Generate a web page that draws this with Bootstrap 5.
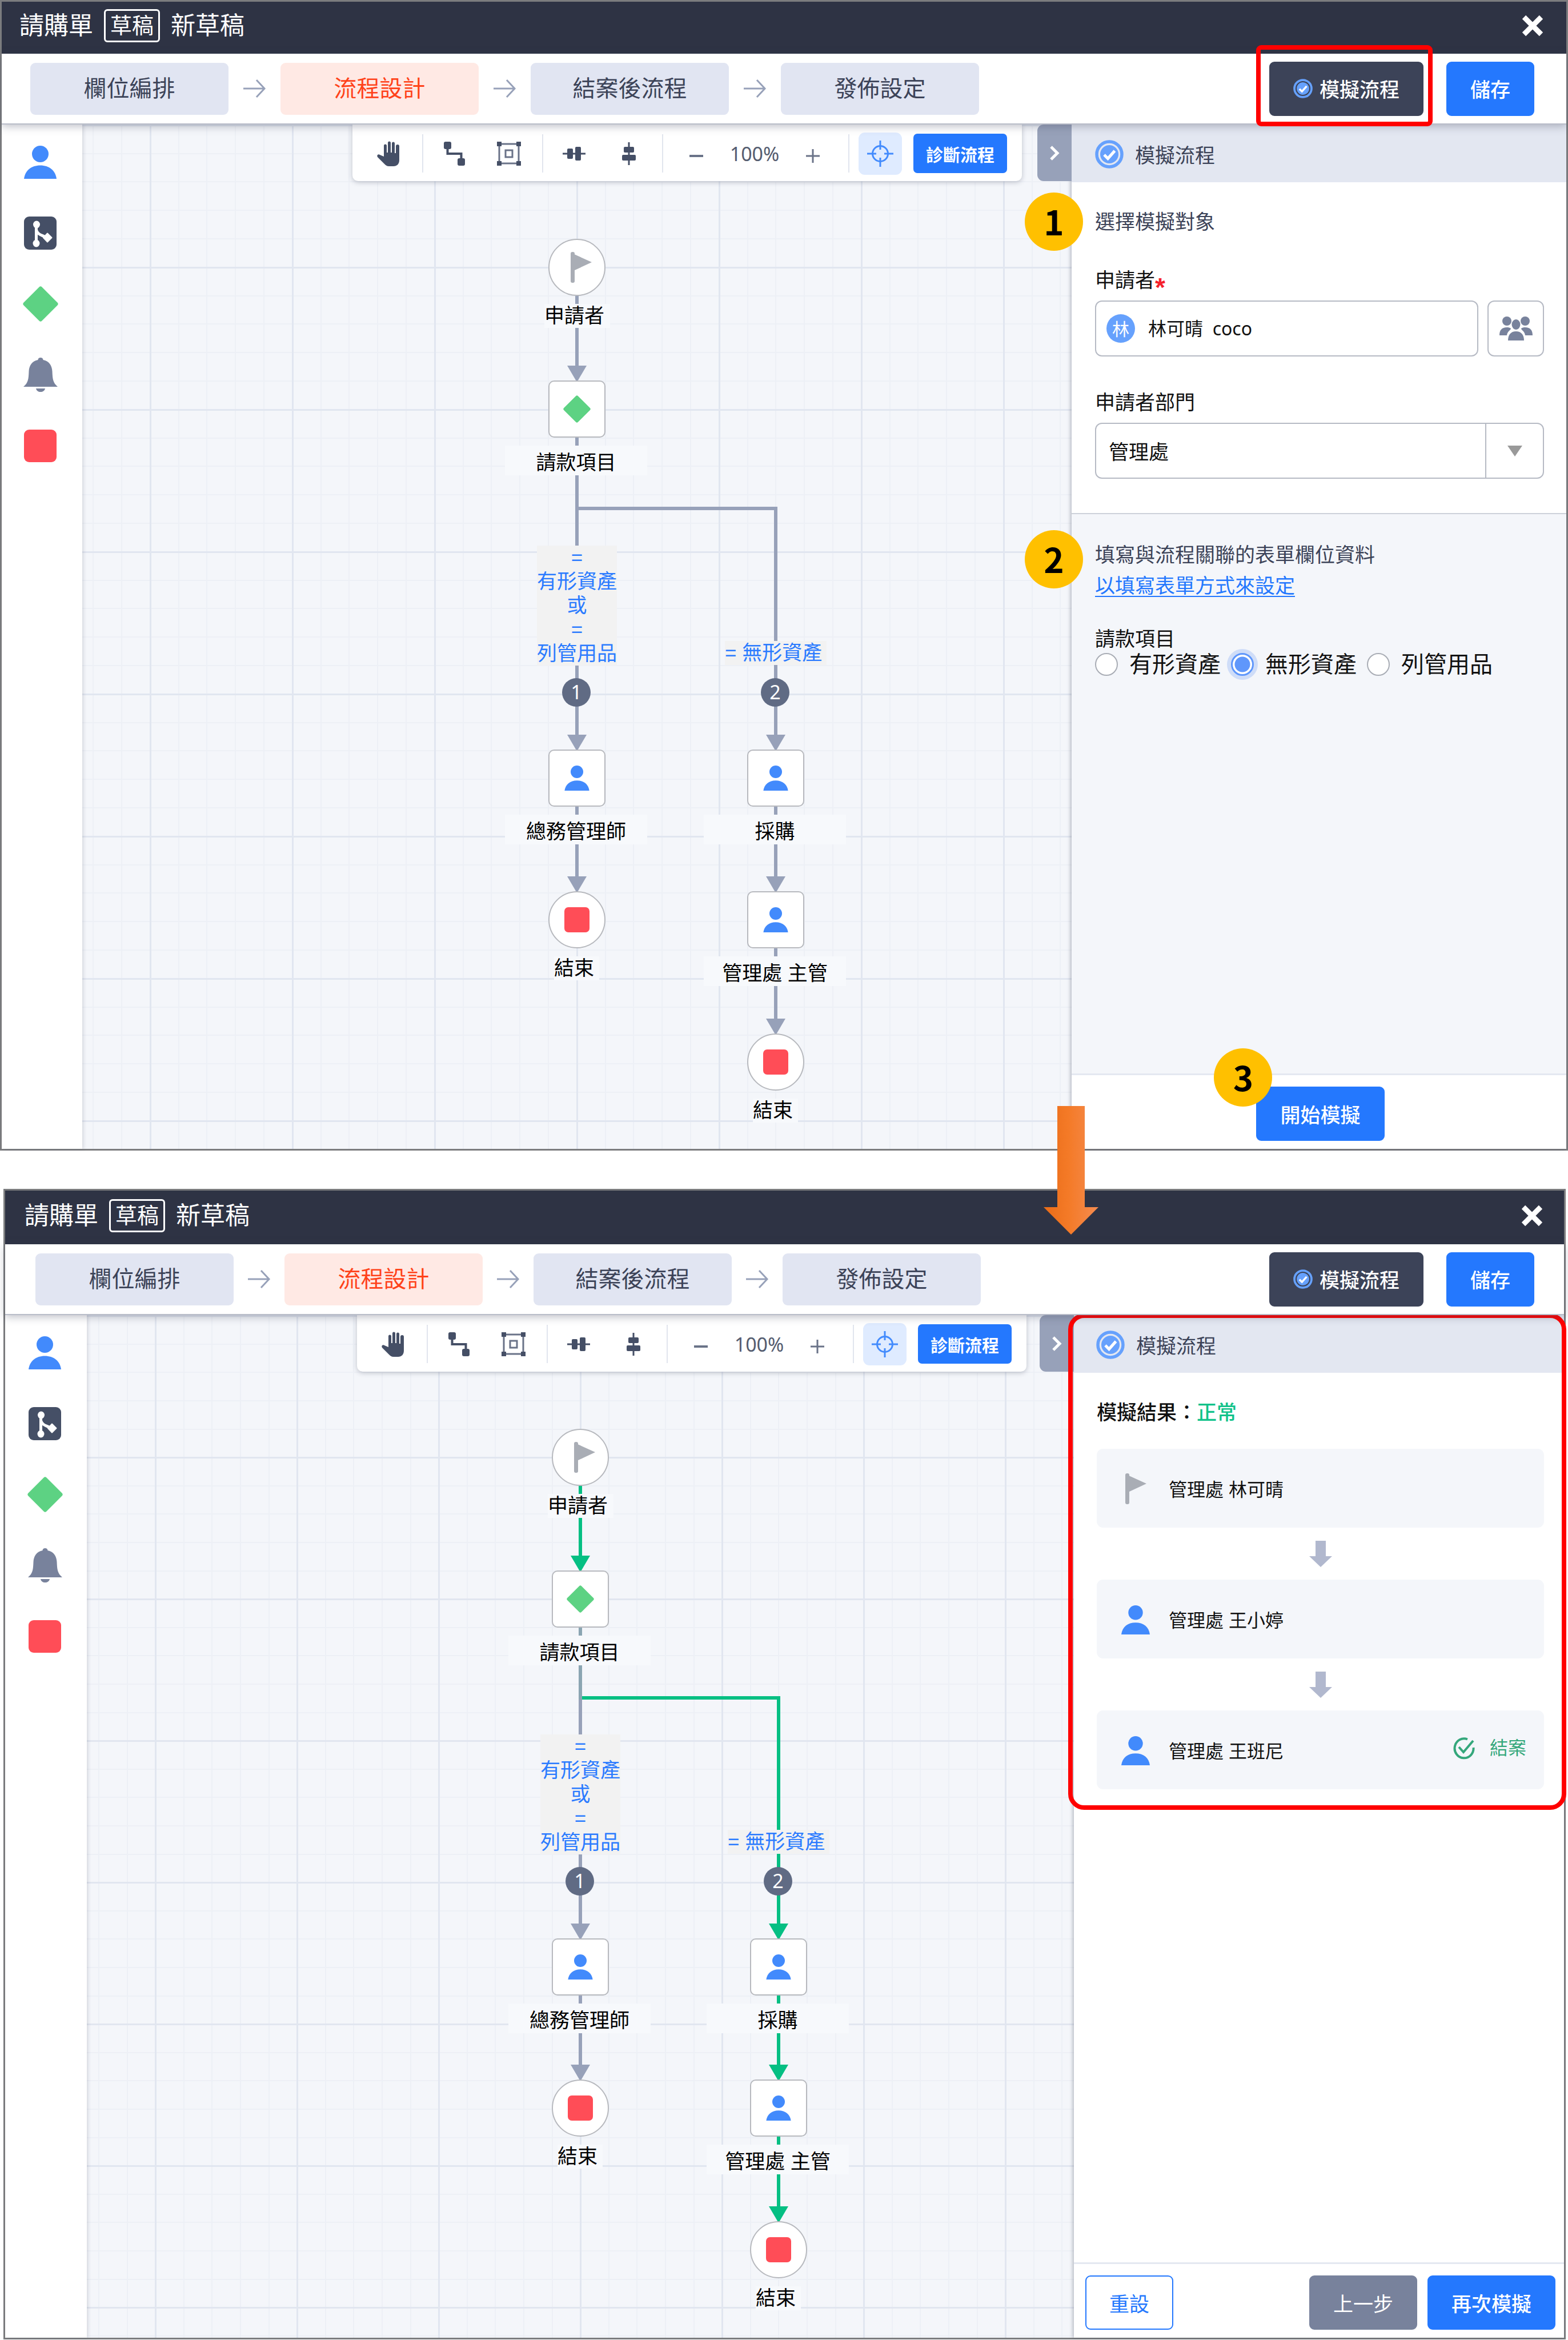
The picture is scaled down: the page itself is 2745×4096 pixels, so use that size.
<!DOCTYPE html>
<html lang="zh-Hant">
<head>
<meta charset="utf-8">
<meta name="viewport" content="width=device-width, initial-scale=1">
<title>請購單 流程設計</title>
<link href="https://cdn.jsdelivr.net/npm/bootstrap@5.3.0/dist/css/bootstrap.min.css" rel="stylesheet">
<style>
  :root {
    --ink: #3c4358;
    --navy: #2e3344;
    --blue: #2478fe;
    --sky: #66a1fd;
    --slate: #78829c;
    --edge: #97a1b9;
    --mist: #f4f6fa;
    --tab: #e3e7f1;
    --cjk: "Noto Sans CJK TC", "Noto Sans", sans-serif;
  }
  body {
    font-family: "Liberation Sans", "Noto Sans CJK TC", sans-serif;
    font-size: 35px;
    line-height: 50px;
    color: #111;
    background: #fff;
  }
  svg { display: block; flex: none; }
  .app-window { border: 3px solid #7b7c7e; }
  .window-after { margin: 0 4px 0 6px; }

  /* title bar */
  .title-bar { height: 91px; padding: 0 39px 8px 31px; background: var(--navy); color: #fff; font-size: 43px; gap: 19px; }
  .window-after .title-bar { height: 94px; padding: 0 36px 6px 34px; }
  .draft-tag { font-size: 38px; line-height: 52px; height: 58px; padding: 0 8px; border: 3px solid #fff; border-radius: 6px; }
  .plain-btn { border: 0; padding: 0; background: none; }

  /* step row */
  .step-row { height: 124px; padding: 0 56px 0 50px; border-bottom: 2px solid #b9bdc9; background: #fff; z-index: 3; box-shadow: 0 3px 14px rgba(60, 67, 88, .35); }
  .window-after .step-row { padding: 0 52px 0 53px; }
  .step-list { gap: 25px; }
  .window-after .step-list { gap: 24px; }
  .step-btn { width: 347px; height: 91px; font-size: 40px; line-height: 50px; border: 0; border-radius: 9px; background: #e1e5f2; color: var(--ink); }
  .step-btn:hover { background: #e1e5f2; color: var(--ink); }
  .step-btn.active { background: #ffe9e4; color: #ff4219; }
  .act-btn { height: 95px; padding: 0 40px; font-family: var(--cjk); font-size: 35px; line-height: 50px; font-weight: 500; border: 2px solid var(--blue); border-radius: 9px; background: var(--blue); color: #fff; }
  .act-dark { background: var(--ink); border-color: var(--ink); gap: 12px; }
  .act-grey { background: var(--slate); border-color: var(--slate); font-weight: 400; }
  .act-line { background: #fff; color: var(--blue); font-weight: 400; }

  /* palette */
  .palette { width: 141px; padding: 4px 6px 0 0; background: #fff; z-index: 1; box-shadow: 2px 0 6px rgba(60, 67, 88, .18); }
  .window-after .palette { width: 143px; padding-right: 4px; }
  .palette button { height: 124px; }

  /* canvas */
  .flow-canvas {
    --pitch: 249px; --ca: 866px; --cb: 1214px;
    --r1: 250px; --r2: 498px; --r3: 994px; --r4: 1144px; --r5: 1392px; --r6: 1641px;
    --cond-a: 737px; --cond-b: 904px;
    height: 1793px;
    background-color: var(--mist);
    background-image:
      linear-gradient(to right, #e1e6f0 0 3px, transparent 3px),
      linear-gradient(to bottom, #e1e6f0 0 3px, transparent 3px),
      linear-gradient(to right, transparent 50px, #edf0f6 50px 52px, transparent 52px 99px, #edf0f6 99px 101px, transparent 101px 149px, #edf0f6 149px 151px, transparent 151px 199px, #edf0f6 199px 201px, transparent 201px),
      linear-gradient(to bottom, transparent 50px, #edf0f6 50px 52px, transparent 52px 99px, #edf0f6 99px 101px, transparent 101px 149px, #edf0f6 149px 151px, transparent 151px 199px, #edf0f6 199px 201px, transparent 201px);
    background-size: var(--pitch) var(--pitch);
    background-position: calc(var(--ca) - 1px) calc(var(--r1) - 1px);
  }
  .window-after .flow-canvas {
    --pitch: 248px; --ca: 864px; --cb: 1211px;
    --r1: 249px; --r2: 497px; --r3: 991px; --r4: 1141px; --r5: 1388px; --r6: 1636px;
    --cond-a: 734px; --cond-b: 901px;
    height: 1790px;
  }
  .edge-layer { position: absolute; left: 0; top: 0; width: 1500px; height: 1700px; fill: none; stroke-width: 6; }
  .on-a { left: var(--ca); }
  .on-b { left: var(--cb); }
  .at-1 { top: var(--r1); }
  .at-2 { top: var(--r2); }
  .at-3 { top: var(--r3); }
  .at-4 { top: var(--r4); }
  .at-5 { top: var(--r5); }
  .at-6 { top: var(--r6); }
  .flow-node { position: absolute; width: 100px; height: 100px; margin: -50px 0 0 -50px; border: 2px solid #b7b9be; border-radius: 10px; background: #fff; }
  .flow-node.is-round { border-radius: 50%; }
  .flow-node.is-start { padding-left: 14px; }
  .flow-caption { position: absolute; width: 249px; height: 52px; padding-top: 8px; line-height: 44px; margin: 64px 0 0 -126px; background: #f7f9fc; color: #000; text-align: center; white-space: nowrap; }
  .flow-caption.is-start, .flow-caption.is-end { height: 42px; padding-top: 0; line-height: 42px; text-align: left; }
  .flow-caption.is-start { width: 115px; margin-left: -57px; }
  .flow-caption.is-end { width: 79px; margin-left: -40px; }
  .flow-rule { position: absolute; width: 140px; margin-left: -70px; line-height: 42px; background: #f2f2f2; color: #2b7bff; text-align: center; white-space: nowrap; }
  .rule-a { top: var(--cond-a); }
  .rule-b { top: var(--cond-b); width: 178px; margin-left: -89px; text-align: left; }
  .flow-order { position: absolute; width: 50px; height: 50px; margin: -25px 0 0 -26px; border-radius: 50%; background: #606b84; color: #fff; font: 34px/48px "Noto Sans", sans-serif; text-align: center; }

  /* floating tools */
  .tool-strip { position: absolute; left: 473px; top: 0; height: 99px; padding: 2px 26px 0; background: #fff; border-radius: 0 0 10px 10px; box-shadow: 0 2px 8px rgba(60, 67, 88, .3); }
  .tool-pair { gap: 20px; }
  .tool-btn { width: 76px; height: 74px; border-radius: 11px; }
  .tool-btn.wide { width: 84px; }
  .tool-btn.lit { background: #dfebff; }
  .tool-rule { width: 2px; height: 67px; margin: 0 16px 0 20px; background: #e1e5ee; }
  .zoom-text { width: 120px; font-family: "Noto Sans", sans-serif; font-size: 34px; text-align: center; color: #555d70; }
  .check-btn { height: 69px; padding: 0 22px; margin-left: 20px; font-family: var(--cjk); font-size: 30px; line-height: 40px; font-weight: 700; border: 0; border-radius: 7px; background: var(--blue); color: #fff; }

  /* side panel */
  .side-panel { width: 866px; background: #fff; z-index: 2; box-shadow: -2px 0 6px rgba(60, 67, 88, .35); }
  .window-after .side-panel { width: 858px; }
  .fold-tab { position: absolute; left: -60px; top: 0; width: 60px; height: 99px; border: 0; border-radius: 11px 0 0 11px; background: var(--edge); }
  .side-head { height: 101px; padding: 2px 0 0 41px; gap: 20px; background: var(--tab); color: var(--ink); font-family: var(--cjk); }
  .window-after .side-head { padding-left: 39px; }
  .side-block { padding: 45px 39px 60px 41px; }
  .field-gap { margin-top: 10px; }
  .field-box { height: 98px; border: 2px solid #b6bac4; border-radius: 12px; background: #fff; }
  .field-box .form-control, .field-box .form-select { border: 0; box-shadow: none; background: none; font-family: var(--cjk); font-size: inherit; line-height: 50px; color: #111; }
  .person-box { padding-left: 18px; gap: 23px; }
  .person-box .form-control { font-family: "Noto Sans", "Noto Sans CJK TC", sans-serif; font-size: 32px; padding: 0; }
  .avatar-dot { width: 50px; height: 50px; border-radius: 50%; background: var(--sky); color: #fff; font-family: var(--cjk); font-size: 30px; line-height: 48px; text-align: center; flex: none; }
  .group-btn { width: 99px; }
  .field-box .form-select { padding: 0 22px; }
  .drop-end { width: 101px; border-left: 2px solid #b6bac4; }
  .need-mark { color: #f5222d; font-size: 46px; font-weight: 700; line-height: 20px; vertical-align: -16px; }
  .form-part { padding-top: 47px; background: var(--mist); border-top: 2px solid #cdd1da; }
  .text-ink { color: var(--ink); }
  .form-part a { color: var(--blue); text-decoration-thickness: 2px; text-underline-offset: 5px; }
  .choice-title { font-size: 35px; line-height: 40px; }
  .choice-row { gap: 18px; font-size: 40px; line-height: 48px; }
  .choice-row .form-check-input { width: 40px; height: 40px; margin: 0 20px 0 0; border: 2px solid #a9adb5; float: none; background-color: #fff; }
  .choice-row .form-check-input:checked { border: 3px solid #5f97fb; background-image: radial-gradient(circle, #5f97fb 0 13px, #fff 14px); box-shadow: 0 0 0 7px #cfddf8; }
  .side-foot { border-top: 3px solid #e4e8f1; padding: 20px 15px 14px 20px; gap: 18px; background: #fff; }

  /* result list */
  .result-block { padding: 45px 35px 0 40px; }
  .result-title { font-weight: 500; margin-bottom: 38px; }
  .pass-text { color: #12c28a; }
  .result-card { height: 138px; padding: 2px 31px 0 43px; border-radius: 11px; background: var(--mist); font-size: 32px; }
  .icon-slot { width: 50px; margin-right: 33px; }
  .result-gap { height: 91px; }
  .done-note { color: #34a77b; gap: 26px; }

  /* annotations */
  .call-frame { position: absolute; border: 8px solid #f00; pointer-events: none; z-index: 4; }
  .frame-btn { inset: -29px 0 -18px -23px; border-radius: 9px; }
  .frame-side { left: -10px; right: -4px; top: -3px; height: 869px; border-radius: 28px; }
  .call-num { position: absolute; width: 102px; height: 102px; border-radius: 50%; background: #ffc000; color: #000; font-family: var(--cjk); font-size: 60px; line-height: 98px; font-weight: 700; text-align: center; z-index: 5; }
  .num-pick { left: -82px; top: 119px; }
  .num-fill { left: -82px; top: 28px; }
  .num-run { left: -74px; top: -67px; }
  .next-step { height: 67px; z-index: 6; }
  .next-step svg { position: absolute; left: 1827px; top: -78px; }
</style>
</head>
<body>

<svg width="0" height="0" class="position-absolute" aria-hidden="true">
  <defs>
    <linearGradient id="orange" x1="0" x2="1" y1="0" y2="0"><stop offset="0" stop-color="#e96c18"/><stop offset=".45" stop-color="#f47a27"/><stop offset="1" stop-color="#f58c50"/></linearGradient>
    <marker id="tip-grey" viewBox="0 0 30 34" refX="1" refY="17" markerWidth="30" markerHeight="34" markerUnits="userSpaceOnUse" orient="auto"><path d="M0 0 29 17 0 34z" fill="#97a1b9"/></marker>
    <marker id="tip-pass" viewBox="0 0 30 34" refX="1" refY="17" markerWidth="30" markerHeight="34" markerUnits="userSpaceOnUse" orient="auto"><path d="M0 0 29 17 0 34z" fill="#05bf83"/></marker>
    <symbol id="i-person" viewBox="0 0 57 58"><circle cx="28.500" cy="14.500" r="14.500"/><path d="M0 58C2 43 13 34.500 28.500 34.500S55 43 57 58z"/></symbol>
    <symbol id="i-branch" viewBox="0 0 57 58"><rect width="57" height="58" rx="9" fill="#454f66"/><path d="M21.500 13v33M21.500 24c3 8 9 8 18 13" fill="none" stroke="#fff" stroke-width="5"/><ellipse cx="22" cy="14" rx="6" ry="6.500" fill="#fff"/><ellipse cx="21.500" cy="47" rx="6" ry="6.500" fill="#fff"/><path d="M41 29.500 48.500 37 41 44.500 34 37z" fill="#fff" stroke="#fff" stroke-width="2" stroke-linejoin="round"/></symbol>
    <symbol id="i-diamond" viewBox="0 0 62 62"><path d="M31 4 58 31 31 58 4 31z" fill="#5dd283" stroke="#5dd283" stroke-width="7" stroke-linejoin="round"/></symbol>
    <symbol id="i-bell" viewBox="0 0 60 60"><path d="M30 0c2.500 0 4.500 1.500 4.500 4C45 6 50 14 50.500 24c.5 13 1 20 9.500 27H0c8.500-7 9-14 9.500-27C10 14 15 6 25.500 4c0-2.500 2-4 4.500-4zM22 54h16c-1 4-4 6-8 6s-7-2-8-6z"/></symbol>
    <symbol id="i-stop" viewBox="0 0 57 57"><rect width="57" height="57" rx="9" fill="#ff4d57"/></symbol>
    <symbol id="i-flag" viewBox="0 0 37 54"><path d="M4 3 37 18 7 32z"/><rect width="7" height="54" rx="3"/></symbol>
    <symbol id="i-check" viewBox="0 0 50 50"><circle cx="25" cy="25" r="22" fill="none" stroke="#66a1fd" stroke-width="5.500"/><circle cx="25" cy="25" r="16" fill="#66a1fd"/><path d="m16 26 6.500 6.500L34.500 19" fill="none" stroke="#fff" stroke-width="5"/></symbol>
    <symbol id="i-close" viewBox="0 0 40 40"><path d="M5 5l30 30M35 5 5 35" stroke="#fff" stroke-width="9"/></symbol>
    <symbol id="i-hand" viewBox="0 0 42 44"><path d="M12 27V8a2.500 2.500 0 0 1 5 0v12h2V3a2.500 2.500 0 0 1 5 0v17h2V4a2.500 2.500 0 0 1 5 0v17h2V9a2.500 2.500 0 0 1 6 0v24c0 7-4 11-10 11h-8c-4 0-6-2-8-4L1 28c-2-3 1-6 4-4z"/></symbol>
    <symbol id="i-link" viewBox="0 0 37 42"><rect x="0" y="0" width="13" height="13" rx="3"/><rect x="24" y="29" width="13" height="13" rx="3"/><path d="M6.500 10v11h24v10" fill="none" stroke="#454f66" stroke-width="4"/></symbol>
    <symbol id="i-frame" viewBox="0 0 42 42"><path d="M4 4h34v34H4zM15 15h12v12H15z" fill="none" stroke="#6a7388" stroke-width="3"/><path d="M0 0h8v8H0zM34 0h8v8h-8zM0 34h8v8H0zM34 34h8v8h-8z"/></symbol>
    <symbol id="i-row" viewBox="0 0 40 24"><path d="M0 10.500h40v3H0z"/><rect x="8" y="3" width="10" height="18" rx="2"/><rect x="22" y="0" width="10" height="24" rx="2"/></symbol>
    <symbol id="i-col" viewBox="0 0 24 40"><path d="M10.500 0h3v40h-3z"/><rect x="3" y="8" width="18" height="10" rx="2"/><rect x="0" y="22" width="24" height="10" rx="2"/></symbol>
    <symbol id="i-minus" viewBox="0 0 24 24"><path d="M0 12h24" stroke="#6a7388" stroke-width="4"/></symbol>
    <symbol id="i-plus" viewBox="0 0 24 24"><path d="M0 12h24M12 0v24" stroke="#6a7388" stroke-width="3"/></symbol>
    <symbol id="i-target" viewBox="0 0 46 46"><g fill="none" stroke="#438bfd" stroke-width="3"><circle cx="23" cy="23" r="13.500"/><path d="M23 0v16M23 30v16M0 23h16M30 23h16"/></g></symbol>
    <symbol id="i-fold" viewBox="0 0 20 28"><path d="m4 3 11 11L4 25" fill="none" stroke="#fff" stroke-width="5"/></symbol>
    <symbol id="i-group" viewBox="0 0 58 42"><circle cx="13" cy="8" r="8"/><circle cx="45" cy="8" r="8"/><path d="M0 33c0-9 4-14 13-14 3 0 5 .5 7 2 0 3-6 4-7 12zM58 33c0-9-4-14-13-14-3 0-5 .5-7 2 0 3 6 4 7 12z"/><ellipse cx="29" cy="14" rx="7.500" ry="9"/><path d="M15 42c0-10 5-16 14-16s14 6 14 16z"/></symbol>
    <symbol id="i-arrow" viewBox="0 0 41 34"><path d="M1 17h37M24 2l14 15-14 15" fill="none" stroke="#97a1b9" stroke-width="3"/></symbol>
    <symbol id="i-down" viewBox="0 0 40 46"><path d="M11 0h18v27h11L20 46 0 27h11z" fill="#b1b8ce"/></symbol>
    <symbol id="i-done" viewBox="0 0 38 40"><g fill="none" stroke="#34a77b" stroke-width="4"><path d="M25 4.500A16.500 17 0 1 0 35.500 19"/><path d="m10 18 8 9L35 7"/></g></symbol>
  </defs>
</svg>

<section class="app-window position-relative">
  <header class="title-bar d-flex align-items-center">
    <span>請購單</span>
    <span class="draft-tag">草稿</span>
    <span>新草稿</span>
    <button type="button" class="plain-btn ms-auto" aria-label="關閉"><svg width="40" height="40"><use href="#i-close"/></svg></button>
  </header>
  <div class="step-row d-flex align-items-center justify-content-between position-relative">
    <nav class="step-list d-flex align-items-center" aria-label="步驟">
      <button type="button" class="btn step-btn">欄位編排</button>
      <svg width="41" height="34"><use href="#i-arrow"/></svg>
      <button type="button" class="btn step-btn active">流程設計</button>
      <svg width="41" height="34"><use href="#i-arrow"/></svg>
      <button type="button" class="btn step-btn">結案後流程</button>
      <svg width="41" height="34"><use href="#i-arrow"/></svg>
      <button type="button" class="btn step-btn">發佈設定</button>
    </nav>
    <div class="d-flex">
      <div class="position-relative me-4 pe-3">
        <button type="button" class="btn act-btn act-dark d-flex align-items-center"><svg width="34" height="34"><use href="#i-check"/></svg>模擬流程</button>
        <span class="call-frame frame-btn"></span>
      </div>
      <button type="button" class="btn act-btn">儲存</button>
    </div>
  </div>
  <div class="d-flex align-items-stretch">
    <aside class="palette d-flex flex-column align-items-center flex-shrink-0">
      <button type="button" class="plain-btn" aria-label="人員"><svg width="57" height="58" fill="#428afc"><use href="#i-person"/></svg></button>
      <button type="button" class="plain-btn" aria-label="分支"><svg width="57" height="58"><use href="#i-branch"/></svg></button>
      <button type="button" class="plain-btn" aria-label="條件"><svg width="62" height="62"><use href="#i-diamond"/></svg></button>
      <button type="button" class="plain-btn" aria-label="通知"><svg width="60" height="60" fill="#78829c"><use href="#i-bell"/></svg></button>
      <button type="button" class="plain-btn" aria-label="結束"><svg width="57" height="57"><use href="#i-stop"/></svg></button>
    </aside>
    <main class="flow-canvas position-relative flex-grow-1">
      <svg class="edge-layer" stroke="#97a1b9">
        <path d="M866 300V423" marker-end="url(#tip-grey)"/>
        <path d="M866 548V1069" marker-end="url(#tip-grey)"/>
        <path d="M866 672H1214V1069" marker-end="url(#tip-grey)"/>
        <path d="M866 1194V1317" marker-end="url(#tip-grey)"/>
        <path d="M1214 1194V1317" marker-end="url(#tip-grey)"/>
        <path d="M1214 1442V1566" marker-end="url(#tip-grey)"/>
      </svg>
      <div class="flow-node is-round is-start on-a at-1 d-flex align-items-center justify-content-center"><svg width="37" height="54" fill="#a9adb5"><use href="#i-flag"/></svg></div>
      <div class="flow-caption is-start on-a at-1">申請者</div>
      <div class="flow-node on-a at-2 d-flex align-items-center justify-content-center"><svg width="48" height="48"><use href="#i-diamond"/></svg></div>
      <div class="flow-caption on-a at-2">請款項目</div>
      <div class="flow-rule rule-a on-a">=<br>有形資產<br>或<br>=<br>列管用品</div>
      <div class="flow-rule rule-b on-b">= 無形資產</div>
      <div class="flow-order on-a at-3">1</div>
      <div class="flow-order on-b at-3">2</div>
      <div class="flow-node on-a at-4 d-flex align-items-center justify-content-center"><svg width="44" height="44" fill="#428afc"><use href="#i-person"/></svg></div>
      <div class="flow-caption on-a at-4">總務管理師</div>
      <div class="flow-node on-b at-4 d-flex align-items-center justify-content-center"><svg width="44" height="44" fill="#428afc"><use href="#i-person"/></svg></div>
      <div class="flow-caption on-b at-4">採購</div>
      <div class="flow-node is-round on-a at-5 d-flex align-items-center justify-content-center"><svg width="44" height="44"><use href="#i-stop"/></svg></div>
      <div class="flow-caption is-end on-a at-5">結束</div>
      <div class="flow-node on-b at-5 d-flex align-items-center justify-content-center"><svg width="44" height="44" fill="#428afc"><use href="#i-person"/></svg></div>
      <div class="flow-caption on-b at-5">管理處 主管</div>
      <div class="flow-node is-round on-b at-6 d-flex align-items-center justify-content-center"><svg width="44" height="44"><use href="#i-stop"/></svg></div>
      <div class="flow-caption is-end on-b at-6">結束</div>

      <div class="tool-strip d-flex align-items-center" role="toolbar" aria-label="畫布工具">
        <button type="button" class="plain-btn tool-btn d-flex align-items-center justify-content-center" aria-label="移動"><svg width="42" height="44" fill="#454f66"><use href="#i-hand"/></svg></button>
        <span class="tool-rule"></span>
        <div class="tool-pair d-flex">
          <button type="button" class="plain-btn tool-btn d-flex align-items-center justify-content-center" aria-label="連線"><svg width="37" height="42" fill="#454f66"><use href="#i-link"/></svg></button>
          <button type="button" class="plain-btn tool-btn d-flex align-items-center justify-content-center" aria-label="框選"><svg width="42" height="42" fill="#454f66"><use href="#i-frame"/></svg></button>
        </div>
        <span class="tool-rule"></span>
        <div class="tool-pair d-flex">
          <button type="button" class="plain-btn tool-btn d-flex align-items-center justify-content-center" aria-label="水平對齊"><svg width="40" height="24" fill="#454f66"><use href="#i-row"/></svg></button>
          <button type="button" class="plain-btn tool-btn d-flex align-items-center justify-content-center" aria-label="垂直對齊"><svg width="24" height="40" fill="#454f66"><use href="#i-col"/></svg></button>
        </div>
        <span class="tool-rule"></span>
        <button type="button" class="plain-btn tool-btn wide d-flex align-items-center justify-content-center pt-2" aria-label="縮小"><svg width="24" height="24"><use href="#i-minus"/></svg></button>
        <span class="zoom-text">100%</span>
        <button type="button" class="plain-btn tool-btn wide d-flex align-items-center justify-content-center pt-2" aria-label="放大"><svg width="24" height="24"><use href="#i-plus"/></svg></button>
        <span class="tool-rule"></span>
        <button type="button" class="plain-btn tool-btn lit d-flex align-items-center justify-content-center" aria-label="置中"><svg width="46" height="46"><use href="#i-target"/></svg></button>
        <button type="button" class="btn check-btn">診斷流程</button>
      </div>
    </main>
    <aside class="side-panel position-relative d-flex flex-column flex-shrink-0">
      <button type="button" class="fold-tab d-flex align-items-center justify-content-center" aria-label="收合"><svg width="20" height="28"><use href="#i-fold"/></svg></button>
      <div class="side-head d-flex align-items-center"><svg width="50" height="50"><use href="#i-check"/></svg>模擬流程</div>
      <span class="call-num num-pick">1</span>
      <div class="side-block">
        <div class="text-ink">選擇模擬對象</div>
        <label for="applicant" class="d-block mt-5 pt-1">申請者<span class="need-mark">*</span></label>
        <div class="d-flex gap-3 field-gap">
          <div class="field-box person-box d-flex align-items-center flex-grow-1">
            <span class="avatar-dot">林</span>
            <input type="text" class="form-control" id="applicant" value="林可晴  coco">
          </div>
          <button type="button" class="field-box group-btn d-flex align-items-center justify-content-center p-0" aria-label="選擇人員"><svg width="58" height="42" fill="#78829c"><use href="#i-group"/></svg></button>
        </div>
        <label for="dept" class="d-block mt-5 pt-2">申請者部門</label>
        <div class="field-box d-flex field-gap">
          <select class="form-select" id="dept"><option>管理處</option></select>
          <span class="drop-end d-flex align-items-center justify-content-center flex-shrink-0"><svg width="26" height="19"><path d="M0 0h26L13 19z" fill="#999"/></svg></span>
        </div>
      </div>
      <div class="side-block form-part flex-grow-1 position-relative">
        <span class="call-num num-fill">2</span>
        <div class="text-ink">填寫與流程關聯的表單欄位資料</div>
        <div class="mt-1"><a href="#">以填寫表單方式來設定</a></div>
        <fieldset class="mt-5">
          <legend class="m-0 choice-title">請款項目</legend>
          <div class="choice-row d-flex align-items-center">
            <div class="d-flex align-items-center"><input class="form-check-input" type="radio" name="item" id="item-a"><label for="item-a">有形資產</label></div>
            <div class="d-flex align-items-center"><input class="form-check-input" type="radio" name="item" id="item-b" checked><label for="item-b">無形資產</label></div>
            <div class="d-flex align-items-center"><input class="form-check-input" type="radio" name="item" id="item-c"><label for="item-c">列管用品</label></div>
          </div>
        </fieldset>
      </div>
      <div class="side-foot d-flex justify-content-center">
        <div class="position-relative">
          <button type="button" class="btn act-btn">開始模擬</button>
          <span class="call-num num-run">3</span>
        </div>
      </div>
    </aside>
  </div>
</section>

<div class="next-step position-relative" aria-hidden="true">
  <svg width="96" height="225" viewBox="0 0 96 225"><path d="M24 0h48v177h24L48 225 0 177h24z" fill="url(#orange)"/></svg>
</div>

<section class="app-window window-after position-relative">
  <header class="title-bar d-flex align-items-center">
    <span>請購單</span>
    <span class="draft-tag">草稿</span>
    <span>新草稿</span>
    <button type="button" class="plain-btn ms-auto" aria-label="關閉"><svg width="40" height="40"><use href="#i-close"/></svg></button>
  </header>
  <div class="step-row d-flex align-items-center justify-content-between position-relative">
    <nav class="step-list d-flex align-items-center" aria-label="步驟">
      <button type="button" class="btn step-btn">欄位編排</button>
      <svg width="41" height="34"><use href="#i-arrow"/></svg>
      <button type="button" class="btn step-btn active">流程設計</button>
      <svg width="41" height="34"><use href="#i-arrow"/></svg>
      <button type="button" class="btn step-btn">結案後流程</button>
      <svg width="41" height="34"><use href="#i-arrow"/></svg>
      <button type="button" class="btn step-btn">發佈設定</button>
    </nav>
    <div class="d-flex">
      <div class="me-4 pe-3">
        <button type="button" class="btn act-btn act-dark d-flex align-items-center"><svg width="34" height="34"><use href="#i-check"/></svg>模擬流程</button>
      </div>
      <button type="button" class="btn act-btn">儲存</button>
    </div>
  </div>
  <div class="d-flex align-items-stretch">
    <aside class="palette d-flex flex-column align-items-center flex-shrink-0">
      <button type="button" class="plain-btn" aria-label="人員"><svg width="57" height="58" fill="#428afc"><use href="#i-person"/></svg></button>
      <button type="button" class="plain-btn" aria-label="分支"><svg width="57" height="58"><use href="#i-branch"/></svg></button>
      <button type="button" class="plain-btn" aria-label="條件"><svg width="62" height="62"><use href="#i-diamond"/></svg></button>
      <button type="button" class="plain-btn" aria-label="通知"><svg width="60" height="60" fill="#78829c"><use href="#i-bell"/></svg></button>
      <button type="button" class="plain-btn" aria-label="結束"><svg width="57" height="57"><use href="#i-stop"/></svg></button>
    </aside>
    <main class="flow-canvas position-relative flex-grow-1">
      <svg class="edge-layer" stroke="#97a1b9">
        <path d="M864 547V1066" marker-end="url(#tip-grey)"/>
        <path d="M864 1191V1313" marker-end="url(#tip-grey)"/>
        <path d="M864 547V673" stroke="#8ba5b2"/>
        <g stroke="#05bf83">
          <path d="M864 299V422" marker-end="url(#tip-pass)"/>
          <path d="M867 670H1211V1066" marker-end="url(#tip-pass)"/>
          <path d="M1211 1191V1313" marker-end="url(#tip-pass)"/>
          <path d="M1211 1438V1561" marker-end="url(#tip-pass)"/>
        </g>
      </svg>
      <div class="flow-node is-round is-start on-a at-1 d-flex align-items-center justify-content-center"><svg width="37" height="54" fill="#a9adb5"><use href="#i-flag"/></svg></div>
      <div class="flow-caption is-start on-a at-1">申請者</div>
      <div class="flow-node on-a at-2 d-flex align-items-center justify-content-center"><svg width="48" height="48"><use href="#i-diamond"/></svg></div>
      <div class="flow-caption on-a at-2">請款項目</div>
      <div class="flow-rule rule-a on-a">=<br>有形資產<br>或<br>=<br>列管用品</div>
      <div class="flow-rule rule-b on-b">= 無形資產</div>
      <div class="flow-order on-a at-3">1</div>
      <div class="flow-order on-b at-3">2</div>
      <div class="flow-node on-a at-4 d-flex align-items-center justify-content-center"><svg width="44" height="44" fill="#428afc"><use href="#i-person"/></svg></div>
      <div class="flow-caption on-a at-4">總務管理師</div>
      <div class="flow-node on-b at-4 d-flex align-items-center justify-content-center"><svg width="44" height="44" fill="#428afc"><use href="#i-person"/></svg></div>
      <div class="flow-caption on-b at-4">採購</div>
      <div class="flow-node is-round on-a at-5 d-flex align-items-center justify-content-center"><svg width="44" height="44"><use href="#i-stop"/></svg></div>
      <div class="flow-caption is-end on-a at-5">結束</div>
      <div class="flow-node on-b at-5 d-flex align-items-center justify-content-center"><svg width="44" height="44" fill="#428afc"><use href="#i-person"/></svg></div>
      <div class="flow-caption on-b at-5">管理處 主管</div>
      <div class="flow-node is-round on-b at-6 d-flex align-items-center justify-content-center"><svg width="44" height="44"><use href="#i-stop"/></svg></div>
      <div class="flow-caption is-end on-b at-6">結束</div>

      <div class="tool-strip d-flex align-items-center" role="toolbar" aria-label="畫布工具">
        <button type="button" class="plain-btn tool-btn d-flex align-items-center justify-content-center" aria-label="移動"><svg width="42" height="44" fill="#454f66"><use href="#i-hand"/></svg></button>
        <span class="tool-rule"></span>
        <div class="tool-pair d-flex">
          <button type="button" class="plain-btn tool-btn d-flex align-items-center justify-content-center" aria-label="連線"><svg width="37" height="42" fill="#454f66"><use href="#i-link"/></svg></button>
          <button type="button" class="plain-btn tool-btn d-flex align-items-center justify-content-center" aria-label="框選"><svg width="42" height="42" fill="#454f66"><use href="#i-frame"/></svg></button>
        </div>
        <span class="tool-rule"></span>
        <div class="tool-pair d-flex">
          <button type="button" class="plain-btn tool-btn d-flex align-items-center justify-content-center" aria-label="水平對齊"><svg width="40" height="24" fill="#454f66"><use href="#i-row"/></svg></button>
          <button type="button" class="plain-btn tool-btn d-flex align-items-center justify-content-center" aria-label="垂直對齊"><svg width="24" height="40" fill="#454f66"><use href="#i-col"/></svg></button>
        </div>
        <span class="tool-rule"></span>
        <button type="button" class="plain-btn tool-btn wide d-flex align-items-center justify-content-center pt-2" aria-label="縮小"><svg width="24" height="24"><use href="#i-minus"/></svg></button>
        <span class="zoom-text">100%</span>
        <button type="button" class="plain-btn tool-btn wide d-flex align-items-center justify-content-center pt-2" aria-label="放大"><svg width="24" height="24"><use href="#i-plus"/></svg></button>
        <span class="tool-rule"></span>
        <button type="button" class="plain-btn tool-btn lit d-flex align-items-center justify-content-center" aria-label="置中"><svg width="46" height="46"><use href="#i-target"/></svg></button>
        <button type="button" class="btn check-btn">診斷流程</button>
      </div>
    </main>
    <aside class="side-panel position-relative d-flex flex-column flex-shrink-0">
      <button type="button" class="fold-tab d-flex align-items-center justify-content-center" aria-label="收合"><svg width="20" height="28"><use href="#i-fold"/></svg></button>
      <div class="side-head d-flex align-items-center"><svg width="50" height="50"><use href="#i-check"/></svg>模擬流程</div>
      <div class="result-block flex-grow-1">
        <div class="result-title">模擬結果：<span class="pass-text">正常</span></div>
        <div class="result-card d-flex align-items-center">
          <span class="icon-slot d-flex justify-content-center"><svg width="37" height="54" fill="#a9adb5"><use href="#i-flag"/></svg></span><span class="pt-1">管理處 林可晴</span>
        </div>
        <div class="result-gap d-flex align-items-center justify-content-center"><svg width="40" height="46"><use href="#i-down"/></svg></div>
        <div class="result-card d-flex align-items-center">
          <span class="icon-slot"><svg width="50" height="51" fill="#428afc"><use href="#i-person"/></svg></span><span class="pt-1">管理處 王小婷</span>
        </div>
        <div class="result-gap d-flex align-items-center justify-content-center"><svg width="40" height="46"><use href="#i-down"/></svg></div>
        <div class="result-card d-flex align-items-center">
          <span class="icon-slot"><svg width="50" height="51" fill="#428afc"><use href="#i-person"/></svg></span><span class="pt-1">管理處 王班尼</span>
          <span class="done-note d-flex align-items-center ms-auto pb-2"><svg width="38" height="40"><use href="#i-done"/></svg>結案</span>
        </div>
      </div>
      <div class="side-foot d-flex">
        <button type="button" class="btn act-btn act-line me-auto">重設</button>
        <button type="button" class="btn act-btn act-grey">上一步</button>
        <button type="button" class="btn act-btn">再次模擬</button>
      </div>
      <span class="call-frame frame-side"></span>
    </aside>
  </div>
</section>

<script src="https://cdn.jsdelivr.net/npm/bootstrap@5.3.0/dist/js/bootstrap.bundle.min.js"></script>
</body>
</html>
